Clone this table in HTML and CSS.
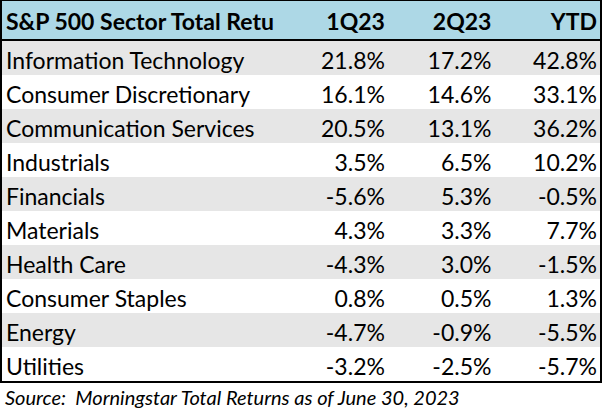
FILE: index.html
```html
<!DOCTYPE html>
<html>
<head>
<meta charset="utf-8">
<link rel="stylesheet" href="styles.css">
</head>
<body>
<table class="returns">
  <colgroup>
    <col class="c-name"><col class="c-num"><col class="c-num"><col class="c-num">
  </colgroup>
  <thead>
    <tr class="head">
      <th class="name">S&amp;P 500 Sector Total Retu</th>
      <th class="num">1Q23</th>
      <th class="num">2Q23</th>
      <th class="num">YTD</th>
    </tr>
  </thead>
  <tbody>
    <tr class="alt"><td class="name">Information Technology</td><td class="num">21.8%</td><td class="num">17.2%</td><td class="num">42.8%</td></tr>
    <tr><td class="name">Consumer Discretionary</td><td class="num">16.1%</td><td class="num">14.6%</td><td class="num">33.1%</td></tr>
    <tr class="alt"><td class="name">Communication Services</td><td class="num">20.5%</td><td class="num">13.1%</td><td class="num">36.2%</td></tr>
    <tr><td class="name">Industrials</td><td class="num">3.5%</td><td class="num">6.5%</td><td class="num">10.2%</td></tr>
    <tr class="alt"><td class="name">Financials</td><td class="num">-5.6%</td><td class="num">5.3%</td><td class="num">-0.5%</td></tr>
    <tr><td class="name">Materials</td><td class="num">4.3%</td><td class="num">3.3%</td><td class="num">7.7%</td></tr>
    <tr class="alt"><td class="name">Health Care</td><td class="num">-4.3%</td><td class="num">3.0%</td><td class="num">-1.5%</td></tr>
    <tr><td class="name">Consumer Staples</td><td class="num">0.8%</td><td class="num">0.5%</td><td class="num">1.3%</td></tr>
    <tr class="alt"><td class="name">Energy</td><td class="num">-4.7%</td><td class="num">-0.9%</td><td class="num">-5.5%</td></tr>
    <tr><td class="name">Utilities</td><td class="num">-3.2%</td><td class="num">-2.5%</td><td class="num">-5.7%</td></tr>
  </tbody>
</table>
<p class="source">Source:&nbsp; Morningstar Total Returns as of June 30, 2023</p>
</body>
</html>
```
FILE: styles.css
```css
html, body {
  margin: 0;
  padding: 0;
  background: #ffffff;
}
body {
  font-family: Lato, "Open Sans", sans-serif;
  color: #000000;
}
.returns {
  border-collapse: collapse;
  table-layout: fixed;
  width: 602px;
  border-top: 1px solid #000;
  border-left: 2px solid #000;
  border-right: 2px solid #000;
  border-bottom: 2px solid #000;
  font-size: 23px;
}
.c-name { width: 279px; }
.c-num { width: 106px; }
.head th {
  background: #add8e6;
  height: 37px;
  padding: 1px 3px 0 4px;
  font-weight: 700;
  border-bottom: 2px solid #000;
  white-space: nowrap;
  overflow: hidden;
}
.head th.name { text-align: left; }
td {
  height: 31px;
  padding: 3px 3px 0 4px;
  white-space: nowrap;
}
.name { text-align: left; }
.num { text-align: right; }
.alt td { background: #e6e6e6; }
.source {
  margin: 2px 0 0 5px;
  font-style: italic;
  font-size: 20px;
}
```
